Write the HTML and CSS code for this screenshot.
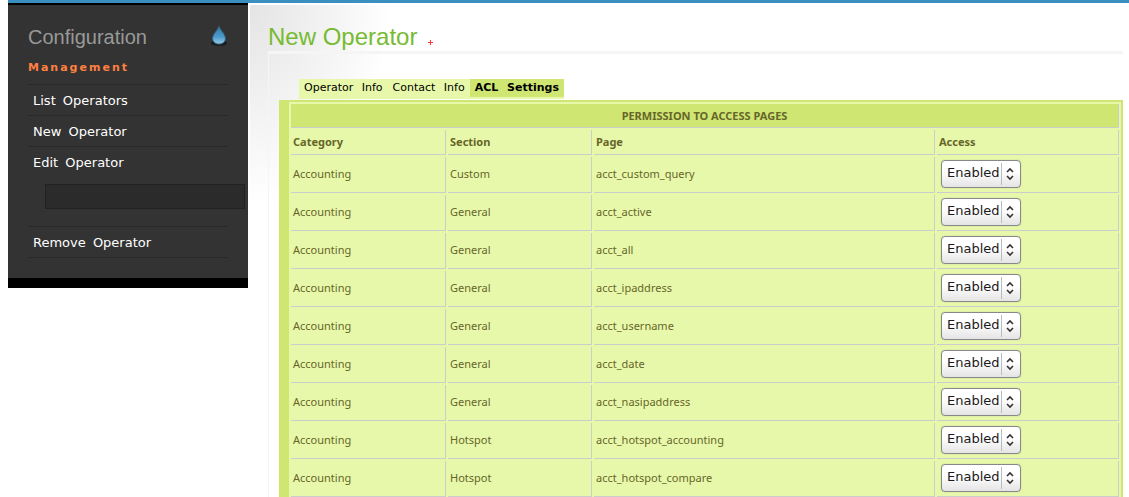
FILE: index.html
```html
<!DOCTYPE html>
<html lang="en">
<head>
<meta charset="utf-8">
<title>New Operator</title>
<link rel="stylesheet" href="styles.css">
</head>
<body>
<div class="wrapper">
  <aside class="sidebar">
    <div class="sidebar-head">
      <h2 class="sidebar-title">Configuration</h2>
      <svg class="drop" viewBox="0 0 20 24" aria-hidden="true">
        <defs><linearGradient id="water" x1="0" y1="0" x2="0" y2="1"><stop offset="0" stop-color="#3b789f"/><stop offset=".6" stop-color="#4b9bcb"/><stop offset="1" stop-color="#9acce6"/></linearGradient></defs>
        <ellipse cx="11" cy="18" rx="8" ry="3" fill="#1a1a1a"/>
        <path d="M11 1C10 5 4.500 9 4.500 13.500C4.500 21 17.500 21 17.500 13.500C17.500 9 12 5 11 1Z" fill="url(#water)" stroke="#2d5d7d"/>
      </svg>
    </div>
    <h3 class="group">Management</h3>
    <ul class="menu">
      <li><a href="#list">List Operators</a></li>
      <li><a href="#new">New Operator</a></li>
      <li><a href="#edit">Edit Operator</a><input class="lookup" type="text" aria-label="Operator to edit"></li>
      <li><a href="#remove">Remove Operator</a></li>
    </ul>
  </aside>
  <main class="content">
    <h1 class="title">New Operator <a class="plus" href="#help" aria-label="Help"><svg viewBox="0 0 5 5" aria-hidden="true"><path d="M0 2.5H5M2.5 0V5" stroke="#f33"/></svg></a></h1>
    <div class="body">
      <nav class="tabs">
        <button class="tab" type="button">Operator Info</button>
        <button class="tab" type="button">Contact Info</button>
        <button class="tab active" type="button">ACL Settings</button>
      </nav>
      <table class="acl">
        <colgroup><col class="c-category"><col class="c-section"><col><col class="c-access"></colgroup>
        <thead>
          <tr><th class="heading" colspan="4">PERMISSION TO ACCESS PAGES</th></tr>
          <tr><th>Category</th><th>Section</th><th>Page</th><th>Access</th></tr>
        </thead>
        <tbody id="rows"></tbody>
      </table>
    </div>
  </main>
</div>
<script src="script.js"></script>
</body>
</html>
```
FILE: styles.css
```css
* { box-sizing: border-box; }
body {
  margin: 0 0 0 8px;
  height: 100vh;
  overflow: hidden;
  border-top: 3px solid #3a8fc0;
  background: #fff;
  font-family: "DejaVu Sans", Verdana, sans-serif;
  font-size: 11px;
  word-spacing: 4px;
}
html { background: #fff; }
h1, h2, h3, ul { margin: 0; padding: 0; font-weight: normal; }
.wrapper { display: flex; align-items: flex-start; gap: 2px; }

.sidebar {
  flex: 0 0 240px;
  min-width: 0;
  padding: 20px 20px;
  background: #333;
  border-top: 2px solid #000;
  border-bottom: 10px solid #000;
}
.sidebar-head { display: flex; justify-content: space-between; height: 26px; }
.sidebar-title {
  font: 20px/24px "Liberation Sans", Arial, sans-serif;
  color: #999;
}
.drop { width: 20px; height: 24px; }
.group {
  padding: 9px 0 8px;
  font-size: 11px;
  line-height: 16px;
  font-weight: bold;
  letter-spacing: 2px;
  color: #ff8040;
}
.menu { list-style: none; border-top: 1px solid #292929; }
.menu li { border-bottom: 1px solid #292929; padding-left: 5px; }
.menu a {
  display: block;
  padding-top: 2px;
  font-size: 13px;
  line-height: 28px;
  word-spacing: 3px;
  color: #fff;
  text-decoration: none;
}
.lookup {
  display: block;
  width: 200px;
  height: 25px;
  margin: 7px 0 17px 12px;
  padding: 0 5px;
  border: 1px solid #222;
  background: #2b2b2b;
  color: #fff;
}

.content {
  flex: 1;
  min-width: 0;
  margin-top: 2px;
  padding: 18px 6px 0 18px;
  background: radial-gradient(ellipse 140px 200px at 0 0, #e4e4e4, #fff) no-repeat;
}
.title {
  display: flex;
  gap: 11px;
  font: 24px/28px "Liberation Sans", Arial, sans-serif;
  color: #77bb33;
  word-spacing: 0;
}
.plus { display: flex; align-items: center; padding-top: 10px; }
.plus svg { width: 5px; height: 5px; }
.body {
  border-top: 3px solid #f5f5f5;
  border-left: 1px solid #f5f5f5;
  padding: 25px 0 0 10px;
}
.tabs {
  display: flex;
  width: max-content;
  margin: 0 0 1px 20px;
  padding-bottom: 2px;
  background: #e8f8aa;
}
.tab {
  height: 18px;
  padding: 0 5px 1px;
  border: 0;
  background: none;
  font: inherit;
  word-spacing: 5px;
  color: #000;
}
.tab.active { background: #cfe673; font-weight: bold; }

.acl {
  width: 100%;
  table-layout: fixed;
  border: 2px solid #cfe673;
  border-left-width: 10px;
  border-spacing: 2px;
  background: #e8f8aa;
  font-family: "Noto Sans", sans-serif;
  color: #666629;
  word-spacing: 0;
}
.c-category { width: 155px; }
.c-section { width: 144px; }
.c-access { width: 182px; }
.acl th, .acl td {
  padding: 0 2px;
  border-right: 1px solid #ccc;
  border-bottom: 1px solid #ccc;
  text-align: left;
  line-height: 16px;
}
.acl th { height: 25px; }
.acl td { height: 36px; padding-bottom: 2px; }
.acl th.heading { height: 24px; text-align: center; background: #cfe673; }
.acl td:last-child { padding-left: 4px; }
.picker { display: flex; position: relative; width: 80px; }
.picker select {
  appearance: none;
  width: 100%;
  height: 28px;
  padding: 0 5px 3px;
  border: 1px solid #888;
  border-radius: 4px;
  background: linear-gradient(#fff 40%, #e4e4e4);
  box-shadow: 0 0 1px #999;
  font: 13px "DejaVu Sans", sans-serif;
  color: #1a1a1a;
}
.picker svg {
  position: absolute;
  right: 2px;
  top: 3px;
  width: 18px;
  height: 22px;
  pointer-events: none;
}
```
FILE: script.js
```js
const pages = [
  ["Custom", "acct_custom_query"],
  ["General", "acct_active"],
  ["General", "acct_all"],
  ["General", "acct_ipaddress"],
  ["General", "acct_username"],
  ["General", "acct_date"],
  ["General", "acct_nasipaddress"],
  ["Hotspot", "acct_hotspot_accounting"],
  ["Hotspot", "acct_hotspot_compare"]
];

document.getElementById("rows").innerHTML = pages.map(([section, page]) => `
  <tr><td>Accounting</td><td>${section}</td><td>${page}</td>
  <td><div class="picker"><select name="${page}" aria-label="${page}"><option>Enabled</option><option>Disabled</option></select>
  <svg viewBox="0 0 18 22" fill="none" aria-hidden="true"><path d="M.5 0V22" stroke="#bbb"/><path d="M6 9L9 6L12 9M6 13L9 16L12 13" stroke="#333" stroke-width="1.6"/></svg></div></td></tr>`).join("");
```
